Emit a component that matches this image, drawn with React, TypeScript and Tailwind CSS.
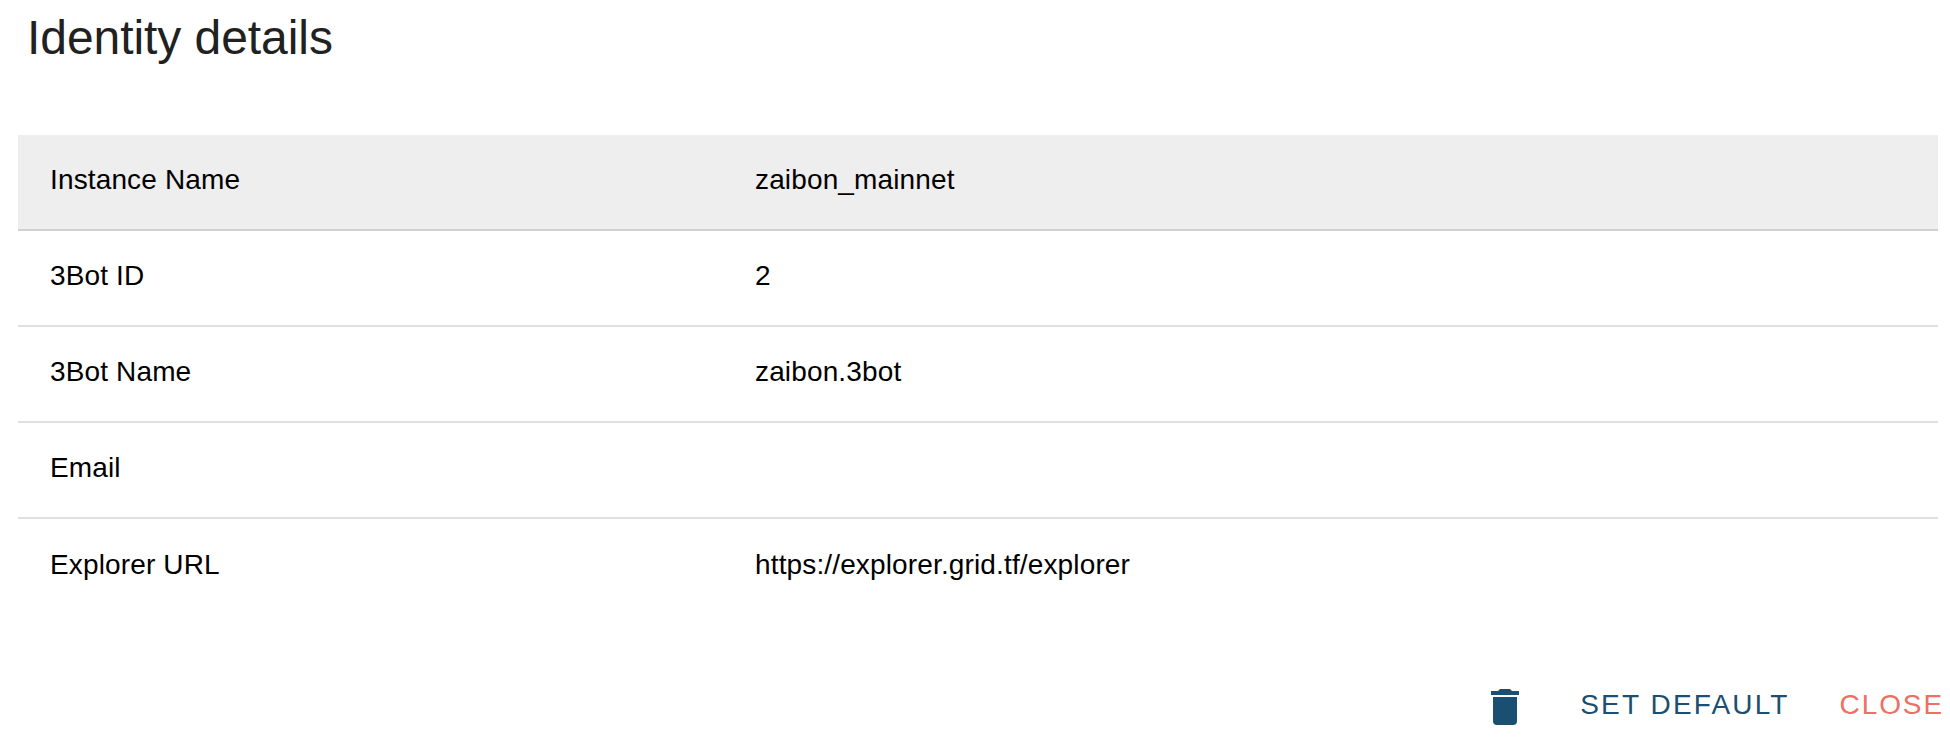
const rows = [
  ['Instance Name', 'zaibon_mainnet'],
  ['3Bot ID', '2'],
  ['3Bot Name', 'zaibon.3bot'],
  ['Email', ''],
  ['Explorer URL', 'https://explorer.grid.tf/explorer'],
];

export default function App() {
  return (
    <div className="h-[738px] w-[1950px] overflow-hidden bg-white font-['Liberation_Sans',sans-serif] text-black">
      <h1 className="h-[135px] pt-[11px] pl-[27px] text-[48px] leading-[53px] tracking-[-0.06px] text-[#212121]">
        Identity details
      </h1>
      <div className="ml-[18px] w-[1920px]">
        {rows.map(([label, value], i) => (
          <div
            key={label}
            className={`flex h-[96px] items-center pb-[5px] text-[28px] leading-[31px] tracking-[0.14px] ${i < 4 ? 'border-b-2' : ''} ${i === 0 ? 'border-[#d0d0d0] bg-[#eeeeee]' : 'border-[#e0e0e0]'}`}
          >
            <div className="w-[705px] pl-[32px]">{label}</div>
            <div className="flex-1 pl-[32px]">{value}</div>
          </div>
        ))}
      </div>
      <div className="mt-[56px] flex h-[72px] items-start justify-end pr-[6px] text-[28px] leading-[31px]">
        <button aria-label="Delete" className="mt-[12px] mr-[51px]">
          <svg viewBox="0 0 24 24" className="h-[48px] w-[48px] fill-[#1b4f72]">
            <path d="M19,4H15.5L14.5,3H9.5L8.5,4H5V6H19M6,19A2,2 0 0,0 8,21H16A2,2 0 0,0 18,19V7H6V19Z" />
          </svg>
        </button>
        <button className="mt-[18px] mr-[50px] tracking-[2.15px] text-[#1b4f72]">SET DEFAULT</button>
        <button className="mt-[18px] tracking-[1.9px] text-[#ec7063]">CLOSE</button>
      </div>
    </div>
  );
}
